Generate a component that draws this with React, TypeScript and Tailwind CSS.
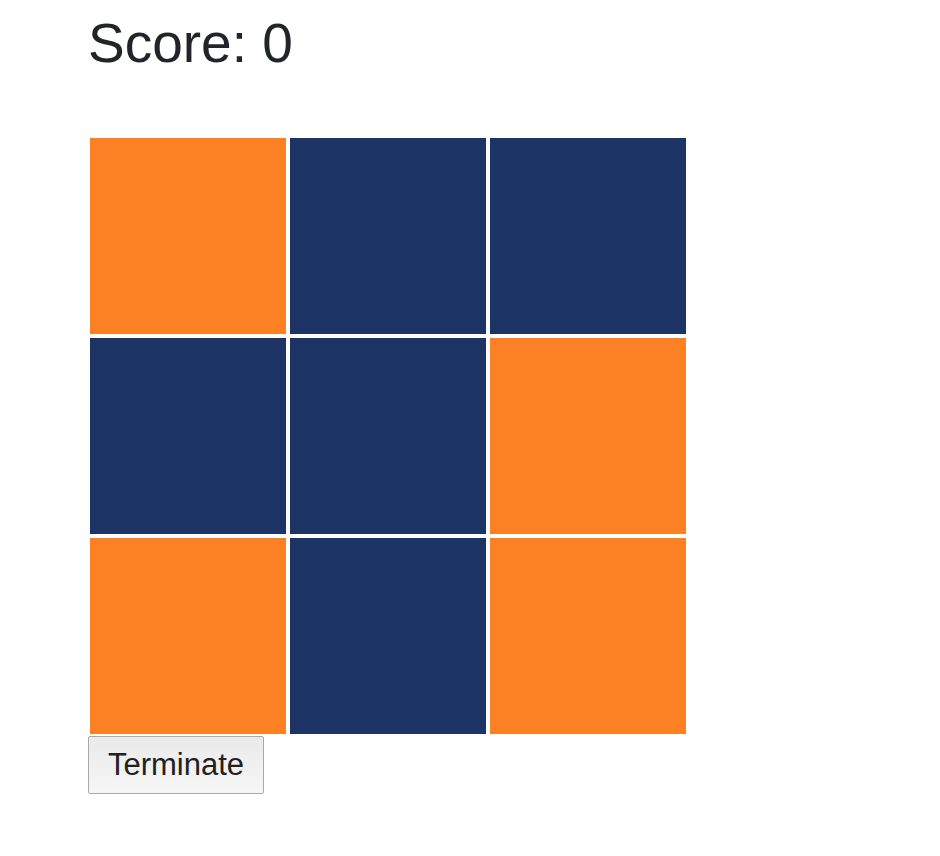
import React from "react";

const cells = ["o", "n", "n", "n", "n", "o", "o", "n", "o"];

export default function App() {
  return (
    <div className="min-h-[856px] w-[940px] bg-white pl-[88px] text-[#212529]" style={{ fontFamily: '"Liberation Sans", Arial, sans-serif' }}>
      <h1 className="m-0 pt-[11px] text-[55px] leading-[64px] font-normal">Score: 0</h1>
      <div className="mt-[61px] grid w-[600px] grid-cols-3">
        {cells.map((c, i) => (
          <div
            key={i}
            className={`h-[200px] w-[200px] border-2 border-white ${c === "o" ? "bg-[#fc8024]" : "bg-[#1c3565]"}`}
          />
        ))}
      </div>
      <button className="block h-[58px] w-[176px] rounded-[2px] border border-[#a9a9a9] bg-gradient-to-b from-[#eaeaea] to-[#f6f6f6] px-0 py-[10px] text-[31px] leading-[36px] text-[#212121]">
        Terminate
      </button>
    </div>
  );
}
